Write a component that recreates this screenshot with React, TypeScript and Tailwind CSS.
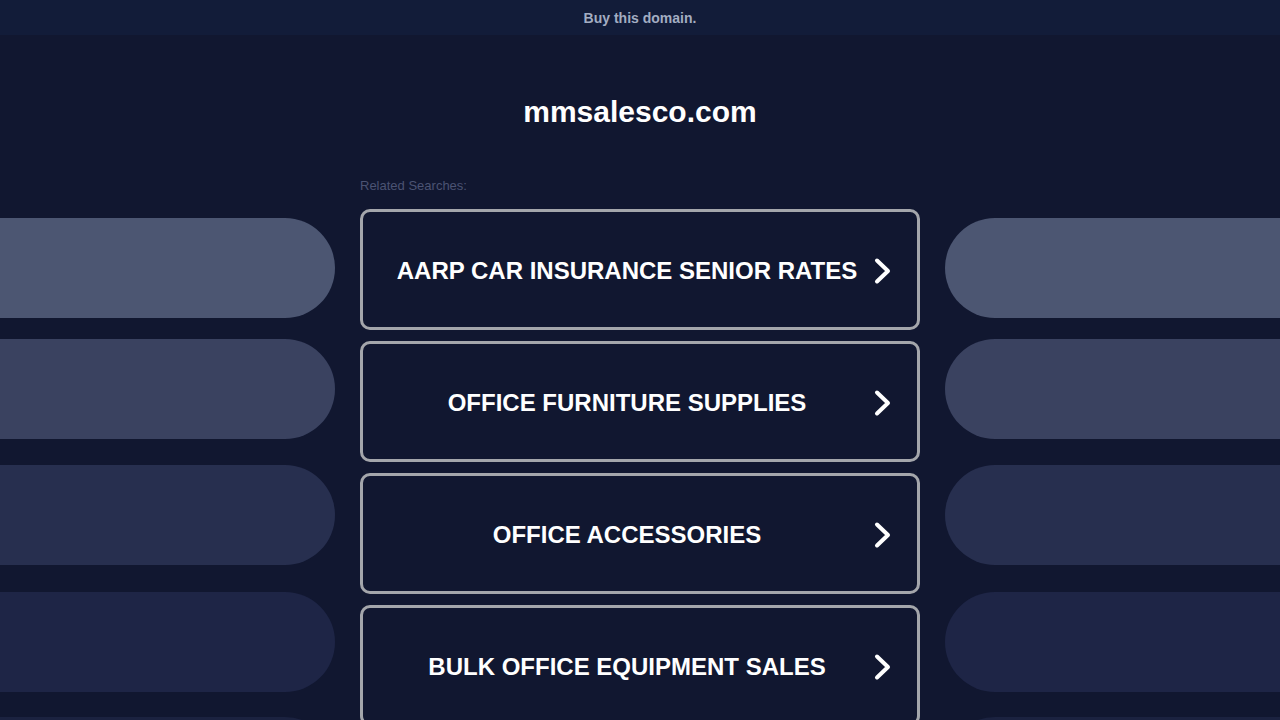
const searches = [
  "AARP CAR INSURANCE SENIOR RATES",
  "OFFICE FURNITURE SUPPLIES",
  "OFFICE ACCESSORIES",
  "BULK OFFICE EQUIPMENT SALES",
];

const pills = [
  { bg: "bg-[#4c5672]", mt: "mt-[42px]" },
  { bg: "bg-[#3a4260]", mt: "mt-[21px]" },
  { bg: "bg-[#272f4f]", mt: "mt-[26px]" },
  { bg: "bg-[#1e2546]", mt: "mt-[27px]" },
  { bg: "bg-[#1b2240]", mt: "mt-[25px]" },
];

function Chevron() {
  return (
    <svg width="20" height="28" viewBox="0 0 20 28" fill="none" className="mt-[2px]">
      <path
        d="M4 3.5 L15 14 L4 24.5"
        stroke="white"
        strokeWidth="4"
        strokeLinecap="round"
        strokeLinejoin="round"
      />
    </svg>
  );
}

function SidePills({ side }: { side: "left" | "right" }) {
  return (
    <div className="flex w-[335px] shrink-0 flex-col">
      {pills.map((p, i) => (
        <div
          key={i}
          className={`${p.mt} ${p.bg} h-[100px] w-full ${
            side === "left" ? "rounded-r-[50px]" : "rounded-l-[50px]"
          }`}
        />
      ))}
    </div>
  );
}

export default function App() {
  return (
    <div className="h-[720px] overflow-hidden bg-[#111730] font-['Liberation_Sans',Arial,sans-serif]">
      <div className="flex h-[35px] items-center justify-center bg-[#121c39] pt-[2px] text-[14px] font-bold text-[#a3adc2]">
        Buy this domain.
      </div>
      <h1 className="mt-[59px] text-center text-[30px] font-bold leading-[36px] text-white">
        mmsalesco.com
      </h1>
      <div className="mt-[46px] flex justify-between">
        <SidePills side="left" />
        <div className="w-[560px] shrink-0">
          <div className="mb-[14px] text-[13px] leading-[19px] text-[#4b5373]">
            Related Searches:
          </div>
          <div className="flex flex-col gap-[11px]">
            {searches.map((s) => (
              <div
                key={s}
                className="flex h-[121px] items-center rounded-[10px] border-[3px] border-[#a4a6ab] pl-[18px] pr-[24px]"
              >
                <span className="flex-1 pt-[2px] text-center text-[24px] font-bold text-white">
                  {s}
                </span>
                <Chevron />
              </div>
            ))}
          </div>
        </div>
        <SidePills side="right" />
      </div>
    </div>
  );
}
